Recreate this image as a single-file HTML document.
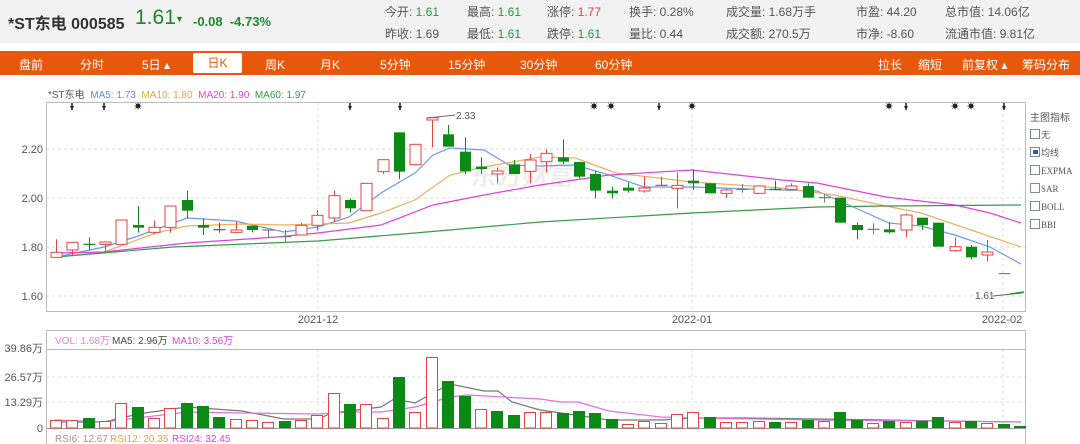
<!DOCTYPE html>
<html><head><meta charset="utf-8">
<style>
*{margin:0;padding:0;box-sizing:border-box}
body{width:1080px;height:444px;overflow:hidden;background:#fff;font-family:"Liberation Sans","Noto Sans CJK SC",sans-serif;position:relative;color:#333}
.hdr{position:absolute;left:0;top:0;width:1080px;height:43px;background:#f2f2f2}
.t{position:absolute;white-space:nowrap}
.bar{position:absolute;left:0;top:51px;width:1080px;height:24px;background:#e8580c}
.bar span{position:absolute;top:5px;color:#fff;font-size:12px;white-space:nowrap}
.st{font-size:12px;color:#555}
.g{color:#1a9a3a}.r{color:#e0414a}
svg{position:absolute;left:0;top:0}
</style></head><body>
<div class="hdr"></div>
<div class="t" style="left:8px;top:10px;font-size:16px;font-weight:bold;color:#333">*ST东电 000585</div>
<div class="t g" style="left:135px;top:6px;font-size:21px;color:#1a8a2a">1.61</div>
<div class="t" style="left:175px;top:14px;font-size:9px;color:#1a8a2a">▼</div>
<div class="t" style="left:193px;top:14px;font-size:13px;font-weight:bold;color:#1a8a2a">-0.08&nbsp; -4.73%</div>
<div class="t st" style="left:385px;top:3px">今开: <span class="g">1.61</span></div>
<div class="t st" style="left:385px;top:25px">昨收: 1.69</div>
<div class="t st" style="left:467px;top:3px">最高: <span class="g">1.61</span></div>
<div class="t st" style="left:467px;top:25px">最低: <span class="g">1.61</span></div>
<div class="t st" style="left:547px;top:3px">涨停: <span class="r">1.77</span></div>
<div class="t st" style="left:547px;top:25px">跌停: <span class="g">1.61</span></div>
<div class="t st" style="left:629px;top:3px">换手: 0.28%</div>
<div class="t st" style="left:629px;top:25px">量比: 0.44</div>
<div class="t st" style="left:726px;top:3px">成交量: 1.68万手</div>
<div class="t st" style="left:726px;top:25px">成交额: 270.5万</div>
<div class="t st" style="left:856px;top:3px">市盈: 44.20</div>
<div class="t st" style="left:856px;top:25px">市净: -8.60</div>
<div class="t st" style="left:945px;top:3px">总市值: 14.06亿</div>
<div class="t st" style="left:945px;top:25px">流通市值: 9.81亿</div>
<div class="bar">
<span style="left:19px">盘前</span><span style="left:80px">分时</span><span style="left:142px">5日 ▴</span>
<span style="left:193px;top:2px;width:49px;height:20px;background:#fff;border-radius:2px;color:#e8580c;text-align:center;line-height:20px">日K</span>
<span style="left:265px">周K</span><span style="left:320px">月K</span><span style="left:380px">5分钟</span><span style="left:448px">15分钟</span><span style="left:520px">30分钟</span><span style="left:595px">60分钟</span>
<span style="left:878px">拉长</span><span style="left:918px">缩短</span><span style="left:962px">前复权 ▴</span><span style="left:1022px">筹码分布</span>
</div>
<div class="t" style="left:48px;top:86px;font-size:10px"><span style="color:#555">*ST东电</span>&nbsp; <span style="color:#5b8ee6">MA5: 1.73</span>&nbsp; <span style="color:#e8a33a">MA10: 1.80</span>&nbsp; <span style="color:#e040e0">MA20: 1.90</span>&nbsp; <span style="color:#2e9e3e">MA60: 1.97</span></div>
<svg width="1080" height="444" id="s" font-family="Liberation Sans, sans-serif">
<g stroke="#ddd" stroke-dasharray="3,3" stroke-width="1">
<line x1="46" y1="149" x2="1026" y2="149"/><line x1="46" y1="198" x2="1026" y2="198"/><line x1="46" y1="247" x2="1026" y2="247"/><line x1="46" y1="296" x2="1026" y2="296"/>
<line x1="318" y1="102" x2="318" y2="311"/><line x1="692" y1="102" x2="692" y2="311"/><line x1="1003" y1="102" x2="1003" y2="311"/>
<line x1="46" y1="377" x2="1026" y2="377"/><line x1="46" y1="402" x2="1026" y2="402"/>
<line x1="318" y1="349" x2="318" y2="428"/><line x1="692" y1="349" x2="692" y2="428"/><line x1="1003" y1="349" x2="1003" y2="428"/>
</g>
<rect x="46.5" y="102.5" width="979" height="209" fill="none" stroke="#bbb"/>
<rect x="46.5" y="330.5" width="979" height="120" fill="none" stroke="#bbb"/>
<line x1="46" y1="349.5" x2="1026" y2="349.5" stroke="#bbb"/>
<line x1="46" y1="428.5" x2="1026" y2="428.5" stroke="#999"/>
<text x="470" y="185" font-size="26" fill="#eee" font-family="Noto Sans CJK SC,sans-serif" font-weight="bold">东方财富</text>
<g font-size="11" fill="#555" text-anchor="end">
<text x="43" y="153">2.20</text><text x="43" y="202">2.00</text><text x="43" y="251">1.80</text><text x="43" y="300">1.60</text>
<text x="43" y="352" font-family="Liberation Sans,Noto Sans CJK SC,sans-serif">39.86万</text><text x="43" y="381" font-family="Liberation Sans,Noto Sans CJK SC,sans-serif">26.57万</text><text x="43" y="406" font-family="Liberation Sans,Noto Sans CJK SC,sans-serif">13.29万</text><text x="43" y="432">0</text>
</g>
<g font-size="11" fill="#555" text-anchor="middle"><text x="318" y="323">2021-12</text><text x="692" y="323">2022-01</text><text x="1002" y="323">2022-02</text></g>
<g id="ma" fill="none" stroke-width="1.2"></g>
<g id="cd"></g>
<g id="vb"></g>
<line x1="428" y1="118" x2="455" y2="115" stroke="#666"/><text x="456" y="119" font-size="10" fill="#555">2.33</text>
<text x="975" y="299" font-size="10" fill="#555">1.61</text><line x1="993" y1="296" x2="1022" y2="293" stroke="#666"/><line x1="1010" y1="294" x2="1024" y2="292" stroke="#2a9a2a" stroke-width="1.5"/>
<g font-size="10" font-family="Liberation Sans,Noto Sans CJK SC,sans-serif"><text x="55" y="344" fill="#e67ee6">VOL: 1.68万</text><text x="112" y="344" fill="#444">MA5: 2.96万</text><text x="172" y="344" fill="#e040e0">MA10: 3.56万</text>
<text x="55" y="442" fill="#999">RSI6: 12.67</text><text x="110" y="442" fill="#e8a33a">RSI12: 20.35</text><text x="172" y="442" fill="#e040e0">RSI24: 32.45</text></g>
<g font-size="10" fill="#555" font-family="Noto Sans CJK SC,sans-serif"><text x="1030" y="121">主图指标</text></g>
<g fill="#fff" stroke="#7a8aa8"><rect x="1030.5" y="129.5" width="9" height="9"/><rect x="1030.5" y="147.5" width="9" height="9"/><rect x="1030.5" y="165.5" width="9" height="9"/><rect x="1030.5" y="183.5" width="9" height="9"/><rect x="1030.5" y="201.5" width="9" height="9"/><rect x="1030.5" y="219.5" width="9" height="9"/></g>
<rect x="1033" y="150" width="5" height="4" fill="#3a5a9a"/>
<g font-size="9" fill="#555" font-family="Liberation Serif,Noto Sans CJK SC,serif"><text x="1041" y="138">无</text><text x="1041" y="156">均线</text><text x="1041" y="174">EXPMA</text><text x="1041" y="192">SAR</text><text x="1041" y="210">BOLL</text><text x="1041" y="228">BBI</text></g>
<g id="mk" font-size="9" fill="#222" text-anchor="middle"></g>
</svg>
<script>
var NS="http://www.w3.org/2000/svg";
function el(p,n,a){var e=document.createElementNS(NS,n);for(var k in a)e.setAttribute(k,a[k]);document.getElementById(p).appendChild(e);return e;}
var C=[['r',457,472,418,472],['r',427,450,427,468],['g',433,435,412,450],['r',426,433,426,455],['r',360,433,360,433],['g',375,383,318,398],['r',382,397,362,402],['r',318,382,318,398],['g',300,332,272,355],['g',375,383,355,405],['g',389,391,368,398],['r',390,397,365,398],['g',377,390,377,397],['x',390,391,390,413],['x',410,411,390,425],['r',376,405,368,405],['r',346,376,330,392],['r',287,354,272,365],['g',300,325,295,338],['r',250,332,250,332],['r',179,215,179,222],['g',97,215,97,237],['r',133,194,133,194],['r',53,60,53,142],['g',103,140,75,140],['g',155,214,112,222],['g',200,207,172,222],['r',213,222,203,250],['g',193,222,180,222],['r',180,214,162,250],
['r',160,185,148,218],['g',172,185,118,192],['g',186,230,186,235],['g',222,272,212,295],['g',272,280,260,295],['g',263,272,248,278],['r',264,273,230,278],['r',256,258,230,258],['r',256,265,218,325],['g',242,250,208,270],['g',250,280,250,280],['r',270,280,265,293],['x',268,269,252,278],['r',258,280,258,280],['g',268,269,242,270],['r',258,268,250,270],['g',258,293,250,293],['x',293,294,282,308],['g',293,368,293,368],['g',375,390,368,418],['x',388,389,370,403],['g',388,397,368,400],['r',345,390,340,412],['g',353,375,353,390],['g',368,440,368,440],['r',440,452,412,455],['g',440,472,435,478],['r',456,465,420,485],['z',521,522,521,522]];
var R="#e8423f",G="#0c8a16",X="#777";
C.forEach(function(c,i){var x=Math.round(56+i*16.34)+.5;var bt=c[1]/3+100,bb=c[2]/3+100,wt=c[3]/3+100,wb=c[4]/3+100;
var col=c[0]=='r'?R:c[0]=='g'?G:c[0]=='z'?'#2a9a2a':X;
el('cd','line',{x1:x,y1:wt,x2:x,y2:wb,stroke:col});
if(c[0]=='x'||c[0]=='z'||bb-bt<1.5){el('cd','line',{x1:x-6,y1:bt,x2:x+6,y2:bt,stroke:col,'stroke-width':c[0]=='z'?1:1.2});}
else if(c[0]=='r')el('cd','rect',{x:x-5.5,y:bt,width:11,height:bb-bt,fill:'#fff',stroke:R});
else el('cd','rect',{x:x-5.5,y:bt,width:11,height:bb-bt,fill:G});
});
var V=[['r',420],['r',420],['g',418],['r',421],['r',403],['g',407],['r',418],['r',408],['g',403],['g',406],['g',417],['r',419],['r',420],['r',422],['g',421],['r',420],['r',415],['r',393],['g',404],['r',404],['r',418],['g',377],['r',412],['r',357],['g',381],['g',396],['r',409],['g',411],['g',415],['r',412],
['r',412],['g',413],['g',411],['g',413],['g',419],['r',424],['r',421],['r',423],['r',414],['r',412],['g',417],['r',422],['r',422],['r',421],['g',422],['r',422],['g',420],['r',421],['g',412],['g',420],['r',423],['g',421],['r',422],['g',421],['g',417],['r',422],['g',421],['r',423],['g',424],['g',426]];
V.forEach(function(v,i){var x=Math.round(56+i*16.34);if(i==59)x=1020;
if(v[0]=='r')el('vb','rect',{x:x-5.5,y:v[1]+.5,width:11,height:428-v[1]-.5,fill:'#fff',stroke:R});
else el('vb','rect',{x:x-6,y:v[1],width:12,height:428-v[1],fill:G});});
function pl(pts,col){el('ma','polyline',{points:pts.map(function(p){return p.join(',')}).join(' '),stroke:col});}
pl([[56,257],[104,247],[138,236],[187,218],[235,221],[284,232],[318,227],[349,217],[381,193],[415,173],[433,155],[450,148],[484,150],[509,165],[540,166],[575,165],[609,175],[644,187],[692,187],[748,189],[817,191],[851,206],[889,223],[921,226],[955,235],[990,247],[1021,264]],'#6f9be8');
pl([[56,257],[104,252],[156,233],[187,226],[242,224],[284,225],[318,224],[349,223],[381,213],[415,200],[450,175],[484,167],[540,157],[575,158],[616,173],[692,182],[782,188],[834,195],[886,206],[921,213],[1021,247]],'#e8b060');
pl([[56,253],[104,252],[187,243],[277,237],[318,233],[381,225],[433,205],[484,195],[540,185],[609,175],[692,170],[782,180],[817,183],[886,197],[955,205],[990,213],[1021,223]],'#e040e0');
pl([[56,257],[173,247],[318,241],[415,233],[540,222],[692,213],[817,207],[886,206],[1021,205]],'#3a9a4a');
pl([[55,422],[104,422],[138,414],[187,407],[242,411],[284,419],[318,419],[332,413],[381,407],[394,399],[415,403],[433,393],[450,384],[484,391],[498,391],[512,402],[540,410],[575,415],[609,420],[661,420],[692,418],[748,418],[817,419],[886,420],[1021,422]],'#777');
pl([[55,420],[104,422],[187,412],[242,413],[318,414],[349,412],[381,412],[415,407],[450,397],[467,395],[540,399],[561,402],[578,402],[609,411],[661,417],[692,418],[817,420],[1021,422]],'#e070e0');
var M=[[72,'a'],[104,'a'],[138,'s'],[350,'a'],[400,'a'],[594,'s'],[611,'s'],[659,'a'],[692,'s'],[889,'s'],[906,'a'],[955,'s'],[971,'s'],[1004,'a']];
M.forEach(function(m){if(m[1]=='a'){el('mk','line',{x1:m[0],y1:103,x2:m[0],y2:110,stroke:'#222','stroke-width':1.5});el('mk','path',{d:'M'+(m[0]-2)+' 106 l2 4 l2 -4z',fill:'#222'});}
else{el('mk','circle',{cx:m[0],cy:106,r:2.2,fill:'#222'});el('mk','path',{d:'M'+(m[0]-3.5)+' 106h7M'+m[0]+' 102.5v7M'+(m[0]-2.5)+' 103.5l5 5M'+(m[0]+2.5)+' 103.5l-5 5',stroke:'#222','stroke-width':0.8});}});
</script>
</body></html>
